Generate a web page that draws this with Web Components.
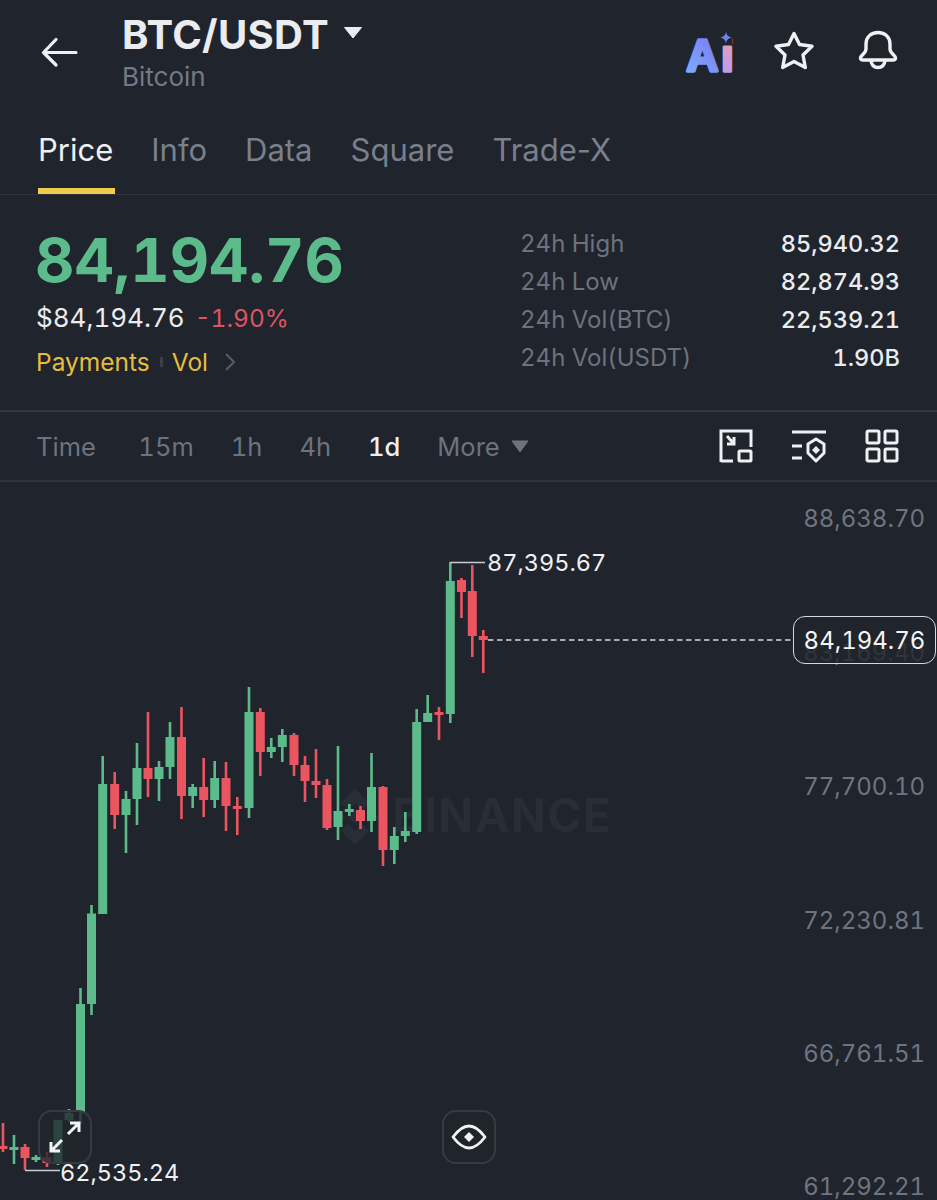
<!DOCTYPE html>
<html lang="en">
<head>
<meta charset="utf-8">
<title>BTC/USDT</title>
<style>
  html, body { margin: 0; background: #20242c; }
  body {
    width: 937px;
    height: 1200px;
    overflow: hidden;
    font-family: Inter, "Open Sans", sans-serif;
    font-variant-numeric: tabular-nums;
    color: #eaecef;
    display: flex;
    flex-direction: column;
  }
</style>
</head>
<body>
<app-header></app-header>
<tab-bar>
  <tab-item active>Price</tab-item>
  <tab-item>Info</tab-item>
  <tab-item>Data</tab-item>
  <tab-item>Square</tab-item>
  <tab-item>Trade-X</tab-item>
</tab-bar>
<market-summary>
  <stat-row label="24h High">85,940.32</stat-row>
  <stat-row label="24h Low">82,874.93</stat-row>
  <stat-row label="24h Vol(BTC)">22,539.21</stat-row>
  <stat-row label="24h Vol(USDT)">1.90B</stat-row>
</market-summary>
<interval-bar></interval-bar>
<kline-chart></kline-chart>

<script>
class AppHeader extends HTMLElement {
  constructor() {
    super();
    this.attachShadow({ mode: "open" });
    this.shadowRoot.innerHTML = `
      <style>
        :host { display: flex; height: 110px; padding: 0 39px 0 40px; box-sizing: border-box; }
        svg { display: block; flex: none; }
        .back { margin-top: 36px; }
        .title { margin-left: 44px; flex: 1; padding-top: 13px; }
        .pair { display: flex; align-items: center; font-size: 40px; line-height: 44px; font-weight: 700; letter-spacing: 0.3px; color: #eaecef; }
        .caret { margin-left: 14px; margin-top: -5px; }
        .name { font-size: 26px; line-height: 30px; margin-top: 5px; color: #747a85; }
        .icons { display: flex; gap: 42px; padding-top: 30px; height: 44px; align-items: flex-start; }
        .ai { margin-right: -7px; }
      </style>
      <svg class="back" width="38" height="32" viewBox="0 0 38 32" fill="none" stroke="#eef0f3" stroke-width="3.2" stroke-linecap="round" stroke-linejoin="round">
        <path d="M36 16.500H4M16 3.500L3.500 16.500L16 29"/>
      </svg>
      <div class="title">
        <div class="pair">BTC/USDT
          <svg class="caret" width="20" height="13" viewBox="0 0 20 13"><path d="M1.500 1.500H18.500L10 12Z" fill="#eaecef" stroke="#eaecef" stroke-linejoin="round"/></svg>
        </div>
        <div class="name">Bitcoin</div>
      </div>
      <div class="icons">
        <svg class="ai" width="54" height="64" viewBox="0 0 54 64">
          <defs>
            <linearGradient id="ga" x1="0" y1="1" x2="1" y2="0">
              <stop offset="0" stop-color="#7fb0ff"/><stop offset="1" stop-color="#7868f0"/>
            </linearGradient>
            <linearGradient id="gi" x1="0" y1="0" x2="0" y2="1">
              <stop offset="0" stop-color="#f0a0a8"/><stop offset="1" stop-color="#b59cf5"/>
            </linearGradient>
          </defs>
          <text x="1.500" y="40.500" font-family="Liberation Sans, sans-serif" font-weight="700" font-size="44" fill="url(#ga)" stroke="url(#ga)" stroke-width="3.400" stroke-linejoin="round">A<tspan dx="3" fill="url(#gi)" stroke="url(#gi)">i</tspan></text>
          <rect x="33" y="4" width="14" height="11.500" fill="#20242c"/>
          <path d="M41 1.500C41.600 5 43 6.500 46.500 7.500C43 8.500 41.600 10 41 13.500C40.400 10 39 8.500 35.500 7.500C39 6.500 40.400 5 41 1.500Z" fill="#6f7ff5"/>
        </svg>
        <svg width="40" height="40" viewBox="0 0 40 40" fill="none" stroke="#f0f1f4" stroke-width="3.400" stroke-linejoin="round">
          <path d="M20 3.500L25.500 14.500L38 16.300L29 25L31.300 37.500L20 31.500L8.700 37.500L11 25L2 16.300L14.500 14.500Z"/>
        </svg>
        <svg style="margin-left:2px" width="40" height="40" viewBox="0 0 40 40" fill="none" stroke="#f0f1f4" stroke-width="3.400" stroke-linejoin="round" stroke-linecap="round">
          <path d="M8 19V14C8 7 13 2.500 20 2.500C27 2.500 32 7 32 14V19C32 23.500 37.500 25 37.500 28C37.500 29.500 36.500 30 35 30H5C3.500 30 2.500 29.500 2.500 28C2.500 25 8 23.500 8 19Z"/>
          <path d="M13 30.500C13.500 35 16 37.500 20 37.500C24 37.500 26.500 35 27 30.500"/>
        </svg>
      </div>
    `;
  }
}

class TabBar extends HTMLElement {
  constructor() {
    super();
    this.attachShadow({ mode: "open" });
    this.shadowRoot.innerHTML = `
      <style>
        :host { display: flex; gap: 38px; height: 85px; padding-left: 38px; box-sizing: border-box; border-bottom: 1px solid #2e333c; font-variant-numeric: normal; }
      </style>
      <slot></slot>
    `;
  }
}

class TabItem extends HTMLElement {
  constructor() {
    super();
    this.attachShadow({ mode: "open" });
    this.shadowRoot.innerHTML = `
      <style>
        :host { display: block; position: relative; font-size: 31px; line-height: 40px; padding-top: 20px; color: #7a808b; }
        :host([active]) { color: #eef0f3; }
        :host([active])::after {
          content: "";
          position: absolute;
          left: 0; right: -2px; bottom: 0;
          height: 6px;
          background: #f0cb4e;
        }
      </style>
      <slot></slot>
    `;
  }
}

class StatRow extends HTMLElement {
  constructor() {
    super();
    this.attachShadow({ mode: "open" });
    this.shadowRoot.innerHTML = `
      <style>
        :host { display: flex; justify-content: space-between; font-size: 24px; line-height: 38px; }
        .label { color: #6d737e; }
        .value { color: #eaecef; font-size: 23.500px; font-weight: 500; }
      </style>
      <span class="label" data-label></span>
      <span class="value"><slot></slot></span>
    `;
  }

  connectedCallback() {
    this.shadowRoot.querySelector("[data-label]").textContent = this.getAttribute("label") || "";
  }
}

class MarketSummary extends HTMLElement {
  constructor() {
    super();
    this.attachShadow({ mode: "open" });
    this.shadowRoot.innerHTML = `
      <style>
        :host { display: flex; justify-content: space-between; height: 217px; padding: 29px 37px 0 36px; box-sizing: border-box; border-bottom: 2px solid #333843; }
        .price { font-size: 61px; line-height: 72px; font-weight: 700; margin-left: -1px; color: #5cbb8a; }
        .sub { display: flex; align-items: baseline; gap: 10px; font-size: 26px; line-height: 34px; margin-top: 5px; }
        .sub .down { font-size: 24.500px; color: #dc5462; }
        .links { display: flex; align-items: center; font-size: 24.500px; line-height: 30px; margin-top: 12px; color: #e8bd3f; }
        .tick { width: 3px; height: 10px; margin: 0 9px 0 10px; background: #3a3f4a; }
        .links svg { margin-left: 17px; }
        .stats { width: 380px; margin-top: 1px; }
      </style>
      <div>
        <div class="price">84,194.76</div>
        <div class="sub"><span>$84,194.76</span><span class="down">-1.90%</span></div>
        <div class="links">
          <span>Payments</span><i class="tick"></i><span>Vol</span>
          <svg width="10" height="18" viewBox="0 0 10 18" fill="none" stroke="#565b66" stroke-width="2.200"><path d="M1 1L9 9L1 17"/></svg>
        </div>
      </div>
      <div class="stats"><slot></slot></div>
    `;
  }
}

class IntervalBar extends HTMLElement {
  constructor() {
    super();
    this.attachShadow({ mode: "open" });
    this.shadowRoot.innerHTML = `
      <style>
        :host { display: flex; align-items: center; height: 70px; padding: 0 38px 0 36px; box-sizing: border-box; border-bottom: 2px solid #2e333c; font-size: 25.500px; color: #6d737e; }
        .times { display: flex; align-items: center; gap: 37px; flex: 1; }
        .time { margin-right: 5.500px; }
        .on { color: #eef0f3; font-weight: 500; }
        .more { display: flex; align-items: center; gap: 11px; }
        .icons { display: flex; gap: 38px; }
        svg { display: block; }
      </style>
      <div class="times">
        <span class="time">Time</span><span>15m</span><span>1h</span><span>4h</span><span class="on">1d</span>
        <span class="more">More
          <svg width="18" height="13" viewBox="0 0 18 13"><path d="M1 1H17L9 12Z" fill="#6d737e" stroke="#6d737e" stroke-linejoin="round"/></svg>
        </span>
      </div>
      <div class="icons">
        <svg width="34" height="34" viewBox="0 0 34 34" fill="none" stroke="#eef0f3" stroke-width="3">
          <path d="M2 33V2H32V18M2 32H14"/>
          <rect x="20" y="22" width="12" height="10" rx="1"/>
          <path d="M8 7L15 15M15 8V15H8"/>
        </svg>
        <svg width="36" height="34" viewBox="0 0 36 34" fill="none" stroke="#eef0f3" stroke-width="3">
          <path d="M1 3H35M1 17H11M1 29H11"/>
          <path d="M25 10L33 15V24L25 32L17 24V15Z" stroke-linejoin="round"/>
          <path d="M25 17L29 21L25 25L21 21Z" fill="#eef0f3" stroke="none"/>
        </svg>
        <svg width="34" height="34" viewBox="0 0 34 34" fill="none" stroke="#eef0f3" stroke-width="3">
          <rect x="2" y="2" width="12" height="12" rx="1.500"/><rect x="20" y="2" width="12" height="12" rx="1.500"/>
          <rect x="2" y="20" width="12" height="12" rx="1.500"/><rect x="20" y="20" width="12" height="12" rx="1.500"/>
        </svg>
      </div>
    `;
  }
}

// x, wick top, body top, body bottom, wick bottom, colour
const CANDLES = [
  [3, 1123, 1146, 1149, 1152, "r"], [14, 1135, 1147, 1150, 1164, "g"], [25, 1144, 1147, 1158, 1170, "r"],
  [36, 1155, 1157, 1160, 1162, "g"], [47, 1152, 1157, 1163, 1167, "r"], [58, 1120, 1120, 1163, 1165, "g"],
  [69, 1109, 1113, 1120, 1122, "g"], [80.500, 988, 1004, 1112, 1124, "g"], [91.500, 905, 913.500, 1004, 1015, "g"],
  [102.700, 756, 784, 914, 914, "g"], [114.700, 772, 784, 815, 829, "r"], [126, 791, 799, 815, 853, "g"],
  [137, 743, 768, 799, 825, "g"], [148, 712, 768, 779, 797, "r"], [159, 761, 767, 779, 801, "g"],
  [170, 722, 737, 767, 779, "g"], [181.500, 707, 737, 796, 819, "r"], [192.700, 784, 787, 796, 808, "g"],
  [203.700, 758, 787, 800, 817, "r"], [214.700, 761, 778, 800, 808, "g"], [226, 762, 778, 806, 831, "r"],
  [237.300, 797, 806, 809, 835, "r"], [249, 687, 712, 808, 818, "g"], [260.300, 708, 712, 752, 776, "r"],
  [271.300, 738, 747, 752, 758, "g"], [282.300, 729, 735, 747, 762, "g"], [294, 733, 735, 765, 776, "r"],
  [305, 756, 765, 781, 802, "r"], [316, 749, 781, 785, 798, "r"], [327, 779, 785, 828, 830, "r"],
  [338, 746, 811, 827, 840, "g"], [349.300, 804, 809, 812, 816, "g"], [360.500, 806, 810, 821, 829, "r"],
  [371.500, 753, 787, 821, 832, "g"], [383, 786, 787, 850, 866, "r"], [394.300, 827, 836, 850, 864, "g"],
  [405.300, 812, 831, 836, 842, "g"], [416.700, 709, 722, 832, 834, "g"], [427.700, 695, 713, 722, 722, "g"],
  [439, 707, 712, 715, 740, "r"], [450.300, 562, 581, 714, 723, "g"], [461.500, 578, 580, 592, 618, "r"],
  [472.300, 565, 591, 636, 657, "r"], [483.300, 630, 636, 640, 673, "r"]
];

class KlineChart extends HTMLElement {
  constructor() {
    super();
    this.attachShadow({ mode: "open" });
    const colours = { g: "#5cbb8a", r: "#ea5560" };
    const candles = CANDLES.map(([x, top, open, close, bottom, c]) => `
      <rect x="${x - 1.3}" y="${top}" width="2.600" height="${bottom - top}" fill="${colours[c]}"/>
      <rect x="${x - 4.5}" y="${open}" width="9" height="${close - open}" fill="${colours[c]}"/>`).join("");
    const axis = [["88,638.70", 518], ["83,169.40", 652], ["77,700.10", 786], ["72,230.81", 920], ["66,761.51", 1053], ["61,292.21", 1186]];
    this.shadowRoot.innerHTML = `
      <style>
        :host { display: block; position: relative; flex: 1; overflow: hidden; }
        svg { position: absolute; left: 0; top: 0; display: block; }
        .axis, .tag, .mark { position: absolute; line-height: 24px; }
        .axis { right: 12px; font-size: 24px; color: #6f7580; transform: translateY(-50%); margin-top: 1px; }
        .mark { font-size: 23.500px; color: #eef0f3; transform: translateY(-50%); }
        .tag {
          left: 793px; top: 134px; width: 143px; height: 48px;
          box-sizing: border-box;
          border: 1.500px solid #d6d8dc; border-radius: 12px;
          background: rgba(32, 36, 44, 0.8);
          font-size: 24px; line-height: 47px; text-align: center; color: #f4f5f7;
        }
        .wm { position: absolute; left: 392px; top: 305px; font-size: 46px; line-height: 56px; font-weight: 700; letter-spacing: 1.500px; color: #292d36; }
        .btn {
          position: absolute; top: 628px; width: 54px; height: 54px;
          box-sizing: border-box;
          border: 2px solid #363a44; border-radius: 14px;
          background: rgba(32, 36, 44, 0.78);
          display: flex; align-items: center; justify-content: center;
        }
        .btn.expand { left: 38px; }
        .btn.eye { left: 442px; }
      </style>
      <svg width="937" height="718" viewBox="0 482 937 718" fill="none">
        <path d="M355 789L369 803L362 810L355 803L348 810L341 803Z M355 845L369 831L362 824L355 831L348 824L341 831Z M331 817L338 810L345 817L338 824Z M379 817L372 810L365 817L372 824Z M355 810L362 817L355 824L348 817Z" fill="#292d36"/>
      </svg>
      <div class="wm">BINANCE</div>
      ${axis.map(([t, y]) => `<div class="axis" style="top:${y - 482}px">${t}</div>`).join("")}
      <svg width="937" height="718" viewBox="0 482 937 718" fill="none">
        ${candles}
        <path d="M450.300 562.500H485" stroke="#c9ccd1" stroke-width="1.500"/>
        <path d="M25 1170.500H60" stroke="#c9ccd1" stroke-width="1.500"/>
        <path d="M488 640H791" stroke="#d6d8dc" stroke-width="1.500" stroke-dasharray="5.500 3.500"/>
      </svg>
      <div class="mark" style="left:487px;top:81px">87,395.67</div>
      <div class="tag">84,194.76</div>
      <div class="btn expand">
        <svg style="position:static" width="34" height="34" viewBox="0 0 34 34" fill="none" stroke="#f2f3f5" stroke-width="3">
          <path d="M20 14L31 3M22 3H31V12M14 20L3 31M3 22V31H12"/>
        </svg>
      </div>
      <div class="btn eye">
        <svg style="position:static" width="36" height="26" viewBox="0 0 36 26" fill="none" stroke="#f2f3f5" stroke-width="2.800" stroke-linejoin="round">
          <path d="M2 13C8 5 13 2 18 2C23 2 28 5 34 13C28 21 23 24 18 24C13 24 8 21 2 13Z"/>
          <path d="M18 8L23 13L18 18L13 13Z" fill="#f2f3f5" stroke="none"/>
        </svg>
      </div>
      <div class="mark" style="left:60px;top:691px">62,535.24</div>
    `;
  }
}

customElements.define("app-header", AppHeader);
customElements.define("tab-bar", TabBar);
customElements.define("tab-item", TabItem);
customElements.define("stat-row", StatRow);
customElements.define("market-summary", MarketSummary);
customElements.define("interval-bar", IntervalBar);
customElements.define("kline-chart", KlineChart);
</script>
</body>
</html>
